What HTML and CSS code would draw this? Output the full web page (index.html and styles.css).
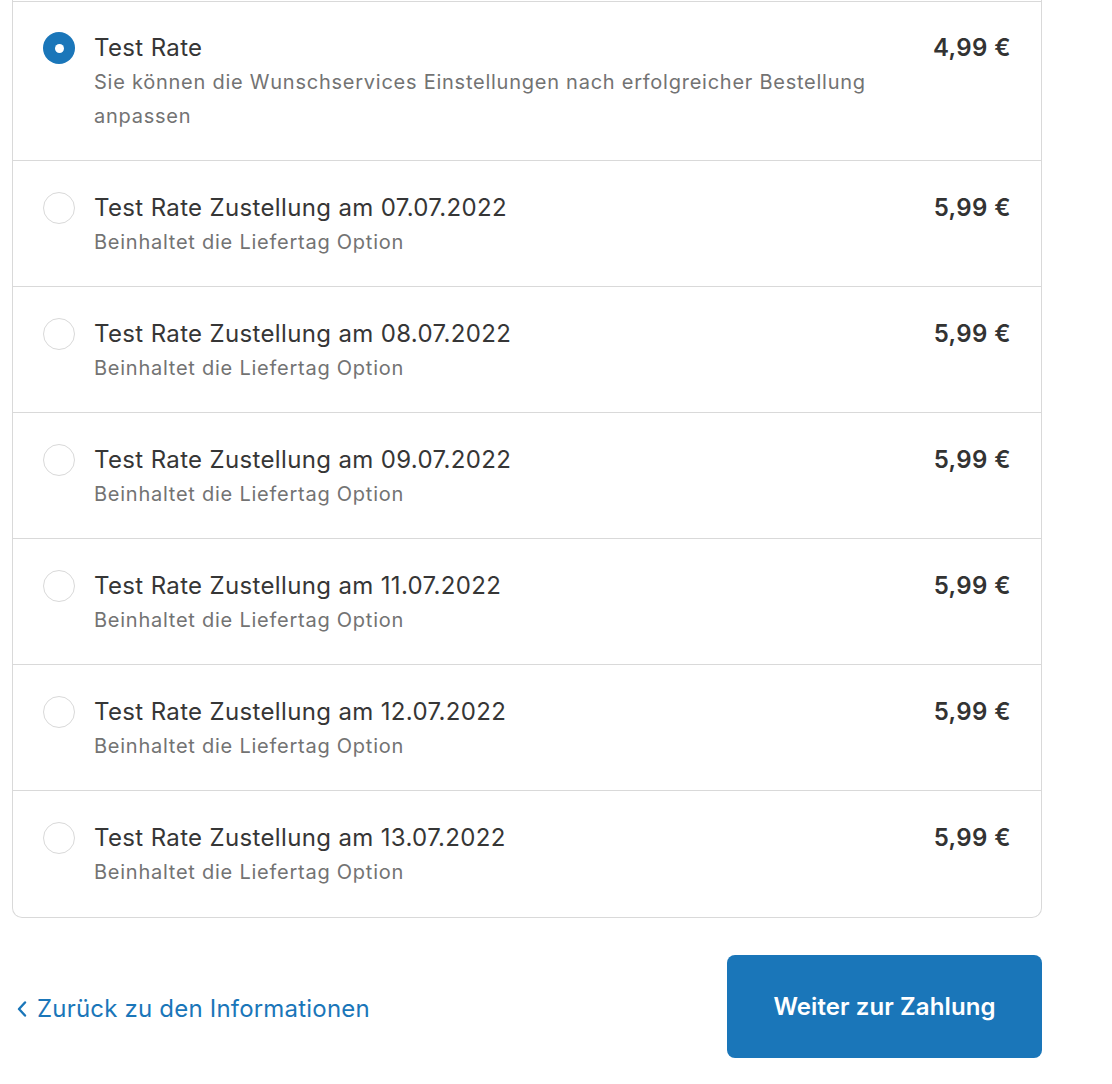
FILE: index.html
```html
<!DOCTYPE html>
<html lang="de">
<head>
<meta charset="utf-8">
<title>Versand</title>
<link rel="stylesheet" href="styles.css">
</head>
<body>
<main class="page">
  <div class="card">
    <label class="rate">
      <span class="radio radio--checked"></span>
      <span class="rate__text">
        <span class="rate__title">Test Rate</span>
        <span class="rate__desc">Sie können die Wunschservices Einstellungen nach erfolgreicher Bestellung anpassen</span>
      </span>
      <span class="rate__price">4,99 €</span>
    </label>
    <label class="rate">
      <span class="radio"></span>
      <span class="rate__text">
        <span class="rate__title">Test Rate Zustellung am 07.07.2022</span>
        <span class="rate__desc">Beinhaltet die Liefertag Option</span>
      </span>
      <span class="rate__price">5,99 €</span>
    </label>
    <label class="rate">
      <span class="radio"></span>
      <span class="rate__text">
        <span class="rate__title">Test Rate Zustellung am 08.07.2022</span>
        <span class="rate__desc">Beinhaltet die Liefertag Option</span>
      </span>
      <span class="rate__price">5,99 €</span>
    </label>
    <label class="rate">
      <span class="radio"></span>
      <span class="rate__text">
        <span class="rate__title">Test Rate Zustellung am 09.07.2022</span>
        <span class="rate__desc">Beinhaltet die Liefertag Option</span>
      </span>
      <span class="rate__price">5,99 €</span>
    </label>
    <label class="rate">
      <span class="radio"></span>
      <span class="rate__text">
        <span class="rate__title">Test Rate Zustellung am 11.07.2022</span>
        <span class="rate__desc">Beinhaltet die Liefertag Option</span>
      </span>
      <span class="rate__price">5,99 €</span>
    </label>
    <label class="rate">
      <span class="radio"></span>
      <span class="rate__text">
        <span class="rate__title">Test Rate Zustellung am 12.07.2022</span>
        <span class="rate__desc">Beinhaltet die Liefertag Option</span>
      </span>
      <span class="rate__price">5,99 €</span>
    </label>
    <label class="rate">
      <span class="radio"></span>
      <span class="rate__text">
        <span class="rate__title">Test Rate Zustellung am 13.07.2022</span>
        <span class="rate__desc">Beinhaltet die Liefertag Option</span>
      </span>
      <span class="rate__price">5,99 €</span>
    </label>
  </div>
  <div class="actions">
    <a class="back" href="#">
      <svg class="back__icon" width="12" height="16" viewBox="0 0 12 16" aria-hidden="true"><path d="M9 1.5 L3 8 L9 14.5" fill="none" stroke="currentColor" stroke-width="2.4" stroke-linecap="round" stroke-linejoin="round"/></svg>
      <span>Zurück zu den Informationen</span>
    </a>
    <button class="btn" type="button">Weiter zur Zahlung</button>
  </div>
</main>
</body>
</html>
```

FILE: styles.css
```css
* { box-sizing: border-box; }
html, body { margin: 0; padding: 0; background: #ffffff; }
body {
  font-family: Inter, "Liberation Sans", Arial, sans-serif;
  color: #333333;
  -webkit-font-smoothing: antialiased;
}
.page {
  width: 1042px;
  padding-left: 12px;
}
.card {
  border: 1px solid #d9d9d9;
  border-top: none;
  border-radius: 0 0 10px 10px;
  padding-top: 1px;
  padding-bottom: 1px;
}
.rate {
  display: flex;
  align-items: flex-start;
  padding: 30px 30px 27px 30px;
  border-top: 1px solid #d9d9d9;
  cursor: pointer;
}
.rate:first-child {
  padding-top: 29px;
  padding-bottom: 27px;
}
.radio {
  flex: 0 0 32px;
  width: 32px;
  height: 32px;
  border-radius: 50%;
  border: 1px solid #d9d9d9;
  background: #fff;
  margin-top: 1px;
  margin-right: 19px;
  display: flex;
  align-items: center;
  justify-content: center;
}
.radio--checked {
  border: none;
  background: #1a76b9;
}
.radio--checked::after {
  content: "";
  width: 9px;
  height: 9px;
  border-radius: 50%;
  background: #fff;
}
.rate__text {
  flex: 1 1 auto;
  display: flex;
  flex-direction: column;
  padding-right: 40px;
}
.rate__title {
  font-size: 24px;
  line-height: 34px;
  letter-spacing: 0.35px;
  color: #363636;
}
.rate__desc {
  font-size: 20px;
  line-height: 34px;
  letter-spacing: 0.75px;
  color: #737373;
  max-width: 790px;
}
.rate__price {
  font-size: 24px;
  line-height: 34px;
  font-weight: 600;
  letter-spacing: 0.4px;
  color: #333333;
  white-space: nowrap;
}
.actions {
  display: flex;
  align-items: center;
  justify-content: space-between;
  margin-top: 37px;
}
.back {
  display: flex;
  align-items: center;
  gap: 9px;
  padding-left: 4px;
  padding-top: 4px;
  color: #1a76b9;
  text-decoration: none;
  font-size: 24px;
  letter-spacing: 0.2px;
}
.back__icon { display: block; }
.btn {
  width: 315px;
  height: 103px;
  border: none;
  border-radius: 8px;
  background: #1a76b9;
  color: #ffffff;
  font-family: inherit;
  font-size: 24px;
  font-weight: 600;
  letter-spacing: 0.1px;
  cursor: pointer;
}
```
